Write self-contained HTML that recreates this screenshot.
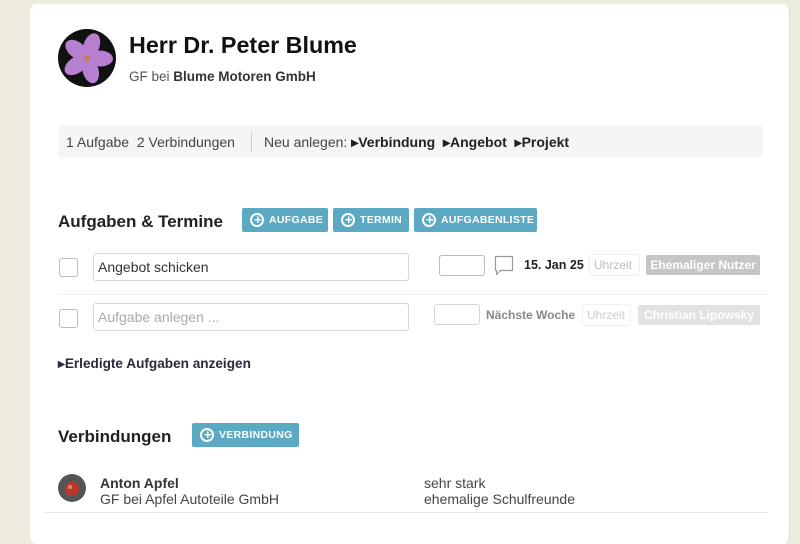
<!DOCTYPE html>
<html><head><meta charset="utf-8"><style>
*{box-sizing:border-box;margin:0;padding:0}
body{width:800px;height:514px;overflow:hidden;background:#eeebdf;font-family:"Liberation Sans",sans-serif;color:#222;position:relative}
.a{position:absolute;white-space:nowrap}
.card{position:absolute;left:30px;top:4px;width:760px;height:540px;background:#fff;border-radius:7px;border-right:1px solid #dcdcd4}
.btn{position:absolute;height:24px;background:#5ba9c3;border-radius:2px;color:#fff;font-size:10.5px;font-weight:bold;letter-spacing:.3px;line-height:24px;padding-left:27px}
.btn:before{content:"";position:absolute;left:8px;top:5px;width:10px;height:10px;border:2px solid #fff;border-radius:50%}
.btn:after{content:"+";position:absolute;left:9px;top:0;width:14px;text-align:center;font-size:13px;line-height:24px}
.box{position:absolute;border:1px solid #d6d6d6;border-radius:3px;background:#fff}
.t13{font-size:14px}
</style></head><body>
<div class="card"></div>
<svg class="a" style="left:58px;top:29px" width="58" height="58" viewBox="0 0 58 58">
<circle cx="29" cy="29" r="29" fill="#111"/>
<g fill="#b77fd0">
<ellipse cx="29" cy="16" rx="8" ry="13" transform="rotate(20 29 29)"/>
<ellipse cx="29" cy="16" rx="8" ry="13" transform="rotate(92 29 29)"/>
<ellipse cx="29" cy="16" rx="8" ry="13" transform="rotate(164 29 29)"/>
<ellipse cx="29" cy="16" rx="8" ry="13" transform="rotate(236 29 29)"/>
<ellipse cx="29" cy="16" rx="8" ry="13" transform="rotate(308 29 29)"/>
</g><circle cx="29" cy="29" r="3" fill="#c97a4a"/>
</svg>
<div class="a" style="left:129px;top:32px;font-size:23.3px;font-weight:bold;color:#111">Herr Dr. Peter Blume</div>
<div class="a" style="left:129px;top:69px;font-size:13.5px;color:#555">GF bei <b style="color:#333">Blume Motoren GmbH</b></div>
<div class="a" style="left:58px;top:125px;width:705px;height:33px;background:#f5f5f5;border-radius:4px"></div>
<div class="a t13" style="left:66px;top:134px;color:#444">1 Aufgabe&nbsp;&nbsp;2 Verbindungen</div>
<div class="a" style="left:251px;top:132px;width:1px;height:20px;background:#ccc"></div>
<div class="a t13" style="left:264px;top:134px;color:#444">Neu anlegen: <b style="color:#222">&#9656;Verbindung&nbsp;&nbsp;&#9656;Angebot&nbsp;&nbsp;&#9656;Projekt</b></div>
<div class="a" style="left:58px;top:212px;font-size:17px;font-weight:bold;color:#222">Aufgaben &amp; Termine</div>
<div class="btn" style="left:242px;top:208px;width:86px">AUFGABE</div>
<div class="btn" style="left:333px;top:208px;width:76px">TERMIN</div>
<div class="btn" style="left:414px;top:208px;width:123px">AUFGABENLISTE</div>
<div class="box" style="left:59px;top:258px;width:19px;height:19px;border-color:#bbb"></div>
<div class="box" style="left:93px;top:253px;width:316px;height:28px"></div>
<div class="a t13" style="left:98px;top:259px;color:#333">Angebot schicken</div>
<div class="box" style="left:439px;top:255px;width:46px;height:21px;border-color:#bbb"></div>
<svg class="a" style="left:494px;top:255px" width="20" height="22"><path d="M1.5 1.5h17v14h-12l-4 4v-4h-1z" fill="none" stroke="#999" stroke-width="1.2" stroke-linejoin="round"/></svg>
<div class="a" style="left:524px;top:258px;font-weight:bold;font-size:12.5px">15. Jan 25</div>
<div class="box" style="left:589px;top:254px;width:51px;height:22px;border-color:#eee"></div>
<div class="a" style="left:594px;top:258px;font-size:12px;color:#bbb">Uhrzeit</div>
<div class="a" style="left:646px;top:255px;width:114px;height:20px;background:#c6c6c6;border-radius:2px;color:#fff;font-size:12px;font-weight:bold;text-align:center;line-height:20px">Ehemaliger Nutzer</div>
<div class="a" style="left:58px;top:294px;width:710px;height:1px;background:#efefef"></div>
<div class="box" style="left:59px;top:309px;width:19px;height:19px;border-color:#bbb"></div>
<div class="box" style="left:93px;top:303px;width:316px;height:28px"></div>
<div class="a t13" style="left:98px;top:309px;color:#aaa">Aufgabe anlegen ...</div>
<div class="box" style="left:434px;top:304px;width:46px;height:21px"></div>
<div class="a" style="left:486px;top:308px;font-size:12px;font-weight:bold;color:#888">Nächste Woche</div>
<div class="box" style="left:582px;top:304px;width:49px;height:22px;border-color:#f0f0f0"></div>
<div class="a" style="left:587px;top:308px;font-size:12px;color:#ccc">Uhrzeit</div>
<div class="a" style="left:638px;top:305px;width:122px;height:20px;background:#e2e2e2;border-radius:2px;color:#fff;font-size:12px;font-weight:bold;text-align:center;line-height:20px">Christian Lipowsky</div>
<div class="a" style="left:58px;top:356px;font-size:13.6px;font-weight:bold;color:#2a2a3a">&#9656;Erledigte Aufgaben anzeigen</div>
<div class="a" style="left:58px;top:427px;font-size:17px;font-weight:bold;color:#222">Verbindungen</div>
<div class="btn" style="left:192px;top:423px;width:107px">VERBINDUNG</div>
<svg class="a" style="left:58px;top:474px" width="28" height="28"><circle cx="14" cy="14" r="14" fill="#555"/><circle cx="14" cy="15" r="7" fill="#b8392b"/><circle cx="12" cy="13" r="2" fill="#e08a70"/></svg>
<div class="a t13" style="left:100px;top:475px;font-weight:bold;color:#333">Anton Apfel</div>
<div class="a t13" style="left:100px;top:491px;color:#444">GF bei Apfel Autoteile GmbH</div>
<div class="a t13" style="left:424px;top:475px;color:#444">sehr stark</div>
<div class="a t13" style="left:424px;top:491px;color:#444">ehemalige Schulfreunde</div>
<div class="a" style="left:44px;top:512px;width:724px;height:1px;background:#e8e8e8"></div>
</body></html>
